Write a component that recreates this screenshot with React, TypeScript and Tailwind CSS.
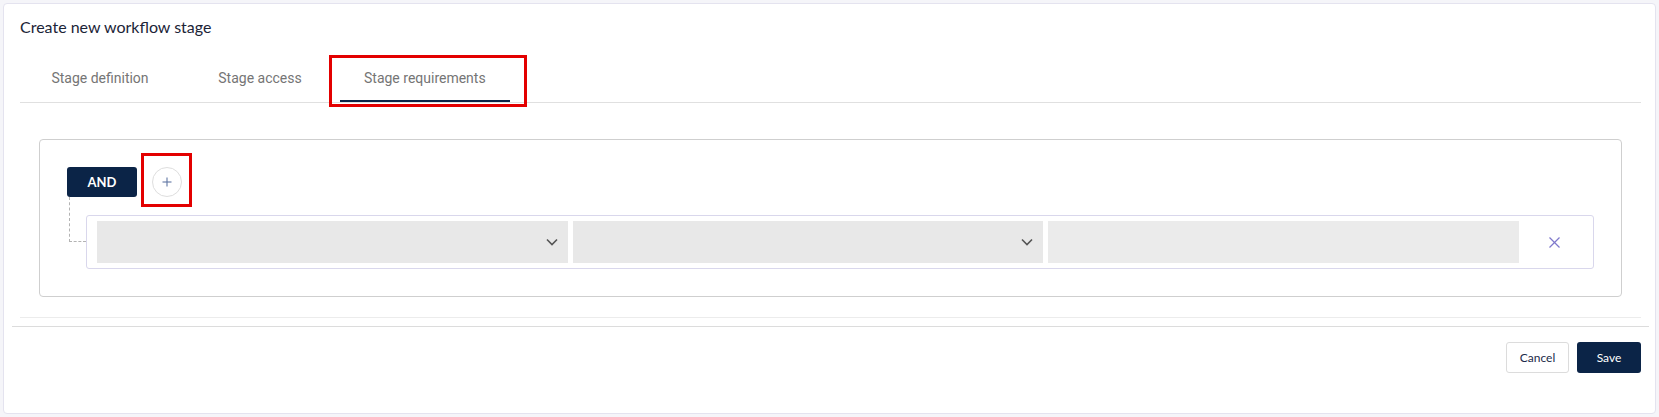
import React from 'react';

const Chevron = () => (
  <svg width="12" height="8" viewBox="0 0 12 8" fill="none">
    <polyline points="1,1.5 6,6.5 11,1.5" stroke="#555" strokeWidth="1.6" />
  </svg>
);

const tabs = ['Stage definition', 'Stage access', 'Stage requirements'];

export default function App() {
  return (
    <div className="w-full h-[417px] bg-[#f5f5f9] p-[3px] font-['Lato',sans-serif]">
      <div className="h-[411px] bg-white border border-[#e4e3ef] rounded-[4px]">
        {/* Header */}
        <div className="pl-4 pr-[14px] pt-[13px]">
          <h1 className="text-[16px] leading-[20px] text-[#1b2437]">Create new workflow stage</h1>
          <div className="mt-[17px] flex border-b border-[#e0e0e0] font-['Roboto',sans-serif]">
            {tabs.map((t, i) => (
              <div
                key={t}
                className="relative min-w-[160px] h-[48px] px-6 flex items-center justify-center text-[14px] text-[#757575]"
              >
                {t}
                {i === 2 && (
                  <>
                    <div className="absolute left-0 right-0 bottom-0 h-[2px] bg-[#0b2447]" />
                    <div className="absolute left-[-11px] top-[1px] w-[198px] h-[52px] border-[3px] border-[#e30000]" />
                  </>
                )}
              </div>
            ))}
          </div>
        </div>

        {/* Rule builder */}
        <div className="pl-4 pr-[14px]">
          <div className="pt-[36px] pb-[20px] border-b border-[#ececec]">
            <div className="mx-[19px] border border-[#cfcfcf] rounded-[4px] p-[27px]">
              <div className="flex items-center gap-[15px]">
                <button className="w-[70px] h-[30px] pt-px rounded-[3px] bg-[#0b2447] text-white text-[13px] font-bold">
                  AND
                </button>
                <div className="relative">
                  <button className="w-[30px] h-[30px] rounded-full border border-[#dedede] bg-white flex items-center justify-center">
                    <svg width="10" height="10" viewBox="0 0 10 10">
                      <line x1="5" y1="0.5" x2="5" y2="9.5" stroke="#5f76a3" strokeWidth="1.1" />
                      <line x1="0.5" y1="5" x2="9.5" y2="5" stroke="#5f76a3" strokeWidth="1.1" />
                    </svg>
                  </button>
                  <div className="absolute left-[-11px] top-[-14px] w-[51px] h-[54px] border-[3px] border-[#e30000]" />
                </div>
              </div>

              <div className="relative ml-[19px] mt-[18px]">
                <div className="absolute left-[-17px] top-[-18px] w-[17px] h-[45px] border-l border-b border-dashed border-[#b3b3b3]" />
                <div className="flex items-center border border-[#d9d7ec] rounded-[3px] pl-[10px] pr-[4px] py-[5px]">
                  <div className="flex-1 grid grid-cols-3 gap-[5px]">
                    <div className="h-[42px] bg-[#e8e8e8] flex items-center justify-end pr-[10px]">
                      <Chevron />
                    </div>
                    <div className="h-[42px] bg-[#e8e8e8] flex items-center justify-end pr-[10px]">
                      <Chevron />
                    </div>
                    <div className="h-[42px] bg-[#ebebeb]" />
                  </div>
                  <div className="w-[70px] flex items-center justify-center">
                    <svg width="11" height="11" viewBox="0 0 11 11">
                      <line x1="0.5" y1="0.5" x2="10.5" y2="10.5" stroke="#7f79cc" strokeWidth="1.3" />
                      <line x1="10.5" y1="0.5" x2="0.5" y2="10.5" stroke="#7f79cc" strokeWidth="1.3" />
                    </svg>
                  </div>
                </div>
              </div>
            </div>
          </div>
        </div>

        {/* Divider */}
        <div className="mt-[8px] ml-[8px] mr-[6px] h-px bg-[#dcdcdc]" />

        {/* Footer */}
        <div className="pr-[14px] mt-[15px] flex justify-end gap-[8px]">
          <button className="w-[63px] h-[31px] border border-[#dcdcdc] rounded-[3px] bg-white text-[12px] text-[#1b2a4a]">
            Cancel
          </button>
          <button className="w-[64px] h-[31px] rounded-[3px] bg-[#0b2447] text-[12px] text-white">
            Save
          </button>
        </div>
      </div>
    </div>
  );
}
